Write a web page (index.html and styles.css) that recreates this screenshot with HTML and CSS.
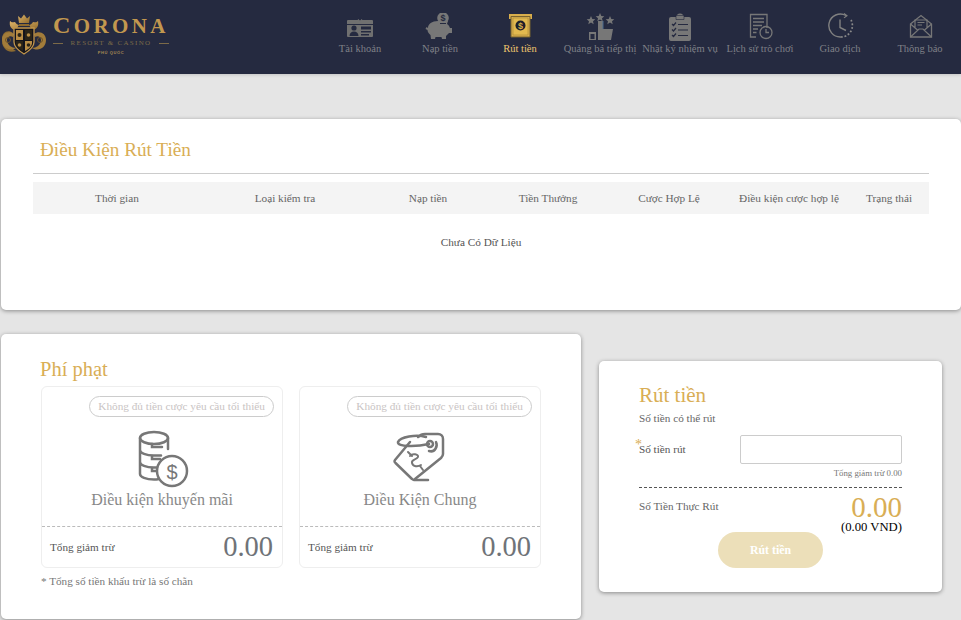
FILE: index.html
```html
<!DOCTYPE html>
<html lang="vi">
<head>
<meta charset="utf-8">
<title>Rút tiền</title>
<link rel="stylesheet" href="styles.css">
</head>
<body>
<header class="topbar">
  <div class="brand">
    <svg class="crest" viewBox="0 0 46 41" width="46" height="41">
      <defs><linearGradient id="gold" x1="0" y1="0" x2="1" y2="1"><stop offset="0" stop-color="#e0b568"/><stop offset="1" stop-color="#8f6a2c"/></linearGradient></defs>
      <path d="M18 9l-1-7 3 2.500L23 .5l3 4 3-2.500-1 7z" fill="url(#gold)"/>
      <path d="M18 10h10v2H18z" fill="#8f6a2c"/>
      <path d="M14 16c-4-1-6-4-5-9 2 2 3 1 5 1 1 2 3 3 4 3l-2 3zM32 16c4-1 6-4 5-9-2 2-3 1-5 1-1 2-3 3-4 3l2 3z" fill="url(#gold)"/>
      <path d="M12 19C7 15 1 18 1 25c0 6 5 11 11 10l3 2c-3 1-6 1-8 0-4-2-6-6-6-10" fill="#8d6b31"/>
      <path d="M13 20C8 16 1 19 1 26s6 11 12 9l2-1c-4 0-9-3-9-8 0-3 3-5 6-3z" fill="#a27c3a"/>
      <path d="M33 20c5-4 12-1 12 6s-6 11-12 9l-2-1c4 0 9-3 9-8 0-3-3-5-6-3z" fill="#a27c3a"/>
      <circle cx="7" cy="26" r="2.500" fill="none" stroke="#6b5128"/><circle cx="39" cy="26" r="2.500" fill="none" stroke="#6b5128"/>
      <path d="M13 14h20v14c0 5-5 9-10 12-5-3-10-7-10-12z" fill="#14141b" stroke="#c2964c" stroke-width="1.300"/>
      <path d="M15 16h7v10h-7zM24 27h7v2c0 3-3 6-7 8z" fill="#b98d45"/>
      <path d="M24 16h7v10h-7zM15 27h7v10c-4-2-7-5-7-8z" fill="#2a2418"/>
      <circle cx="18.500" cy="21" r="2" fill="#2a2418"/><circle cx="27.500" cy="21" r="1.800" fill="#b98d45"/><circle cx="18.500" cy="31" r="1.800" fill="#b98d45"/><circle cx="27.500" cy="31" r="1.800" fill="#2a2418"/>
    </svg>
    <div class="wordmark">
      <div class="wordmark-name"><span class="wordmark-initial">C</span>ORONA</div>
      <div class="wordmark-sub"><i></i><span>RESORT &amp; CASINO</span><i></i></div>
      <div class="wordmark-place">PHÚ QUỐC</div>
    </div>
  </div>
  <nav class="nav">
    <a class="nav-item">
      <svg class="nav-icon" viewBox="0 0 80 28"><path d="M28 7h9.500a3 3 0 0 1 5 0H52a1 1 0 0 1 1 1v3H27V8a1 1 0 0 1 1-1z" fill="#707070"/><circle cx="40" cy="6" r="1.300" fill="#252a40"/><path d="M27 12h26v11a1 1 0 0 1-1 1H28a1 1 0 0 1-1-1z" fill="#707070"/><circle cx="34" cy="15" r="2.600" fill="#252a40"/><path d="M29.500 23c0-3 2-4.500 4.500-4.500s4.500 1.500 4.500 4.500z" fill="#252a40"/><path d="M41 13.500h10v3H41zM41 18h10v1.500H41zM41 21h8v1.500h-8z" fill="#252a40"/></svg>
      <span>Tài khoản</span>
    </a>
    <a class="nav-item">
      <svg class="nav-icon" viewBox="0 0 80 28"><circle cx="43" cy="5" r="5.800" fill="#777"/><text x="43" y="8" class="coin-text" fill="#252a40">$</text><path d="M28 15c0-4 4-7 10-7 2 0 4 .5 5.500 1 1.500-1 3.500-1.500 4.500-1l-1 3c1.500 1 2.500 2.500 3 4h2v5h-3c-1 1-2 2-3 3v3h-4l-.5-2h-6l-.5 2h-4l-.5-4c-2-1.500-3-3.500-3-5l-2-1 1-2z" fill="#777"/><path d="M40 10.500h6" stroke="#252a40" stroke-width="1"/></svg>
      <span>Nạp tiền</span>
    </a>
    <a class="nav-item is-active">
      <svg class="nav-icon" viewBox="0 0 80 28"><path d="M29 1h23v5h-2V4H31v2h-2z" fill="#d9ae4c"/><path d="M31 3.500h19V24H31z" fill="#d9ae4c" stroke="#77622f" stroke-width="1"/><path d="M33 5h15v17H33z" fill="#e2b94f" stroke="#a98838" stroke-width=".6"/><circle cx="40.500" cy="12.500" r="5" fill="#1d1f2b"/><text x="40.500" y="15.500" class="coin-text" fill="#d9ae4c">$</text></svg>
      <span>Rút tiền</span>
    </a>
    <a class="nav-item">
      <svg class="nav-icon" viewBox="0 0 80 28"><path d="M31 3l1.300 2.900 3 .3-2.300 2 .7 3-2.700-1.600-2.700 1.600.7-3-2.300-2 3-.3zM40 0l1.300 2.900 3 .3-2.300 2 .7 3-2.700-1.600-2.700 1.600.7-3-2.300-2 3-.3zM50 3l1.300 2.900 3 .3-2.300 2 .7 3-2.700-1.600-2.700 1.600.7-3-2.300-2 3-.3z" fill="#777"/><path d="M29 19h7v8h-7z" fill="#777"/><path d="M30.500 21h4v5h-4z" fill="#252a40"/><path d="M38 8h5v8h10l-2 11H38z" fill="#777"/><path d="M43 8v8" stroke="#4a6a8f" stroke-width="1"/></svg>
      <span>Quảng bá tiếp thị</span>
    </a>
    <a class="nav-item">
      <svg class="nav-icon" viewBox="0 0 80 28"><path d="M31 4h5.500a3.500 3.500 0 0 1 7 0H49a2 2 0 0 1 2 2v20a2 2 0 0 1-2 2H31a2 2 0 0 1-2-2V6a2 2 0 0 1 2-2z" fill="#777"/><path d="M36 2.500h8v4h-8z" fill="#777" stroke="#252a40" stroke-width=".6"/><path d="M32 11l1.500 1.500 2.500-3M32 16.500l1.500 1.500 2.500-3M32 22l1.500 1.500 2.500-3M38 11.500h10M38 17h10M38 22.500h10" fill="none" stroke="#252a40" stroke-width="1.200"/></svg>
      <span>Nhật ký nhiệm vụ</span>
    </a>
    <a class="nav-item">
      <svg class="nav-icon" viewBox="0 0 80 28"><path d="M36 24h-5.500V1.500h16.500V15" fill="none" stroke="#777" stroke-width="1.300"/><path d="M33 5.500h11M33 9h11M33 12.500h9M33 16h5M33 19.500h3.500" stroke="#777" stroke-width="1.300"/><circle cx="46" cy="19.500" r="6" fill="none" stroke="#777" stroke-width="1.300"/><path d="M46 16v3.500h3" fill="none" stroke="#777" stroke-width="1.300"/></svg>
      <span>Lịch sử trò chơi</span>
    </a>
    <a class="nav-item">
      <svg class="nav-icon" viewBox="0 0 80 28"><path d="M46 2.500A11.500 11.500 0 1 0 41 24" fill="none" stroke="#808080" stroke-width="1.400"/><path d="M41 24A11.500 11.500 0 0 0 51 7" fill="none" stroke="#8a8a8a" stroke-width="1.700" stroke-dasharray="1.800 1.800"/><path d="M44 .5l3 2.200-3 2.200" fill="none" stroke="#808080" stroke-width="1.100"/><path d="M40 6.500v8l6 3" fill="none" stroke="#808080" stroke-width="1.400"/></svg>
      <span>Giao dịch</span>
    </a>
    <a class="nav-item">
      <svg class="nav-icon" viewBox="0 0 80 28"><path d="M30.500 11L41 2.500 51.500 11v13h-21z" fill="none" stroke="#777" stroke-width="1.300"/><path d="M30.500 24l8.500-8h4l8.500 8M30.500 11l7 6M51.500 11l-7 6M35 15V7h12v8" fill="none" stroke="#777" stroke-width="1.200"/><path d="M37.500 9.500h7M37.500 12h4.500" stroke="#777" stroke-width="1"/></svg>
      <span>Thông báo</span>
    </a>
  </nav>
</header>

<main class="page">
  <section class="card card-conditions">
    <h2 class="title title-conditions">Điều Kiện Rút Tiền</h2>
    <table class="table">
      <colgroup><col class="c1"><col class="c2"><col class="c3"><col class="c4"><col class="c5"><col class="c6"><col class="c7"></colgroup>
      <thead>
        <tr><th>Thời gian</th><th>Loại kiểm tra</th><th>Nạp tiền</th><th>Tiền Thưởng</th><th>Cược Hợp Lệ</th><th>Điều kiện cược hợp lệ</th><th>Trạng thái</th></tr>
      </thead>
      <tbody>
        <tr><td colspan="7">Chưa Có Dữ Liệu</td></tr>
      </tbody>
    </table>
  </section>

  <div class="lower">
    <section class="card card-penalty">
      <h2 class="title title-penalty">Phí phạt</h2>
      <div class="penalty-grid">
        <article class="penalty">
          <div class="penalty-body">
            <span class="pill">Không đủ tiền cược yêu cầu tối thiểu</span>
            <svg class="penalty-icon" viewBox="0 0 60 60" width="60" height="60">
              <g fill="none" stroke="#777" stroke-width="2.500" stroke-linecap="round">
                <ellipse cx="22" cy="8" rx="14" ry="6"/>
                <path d="M8 8v36c0 3 6 5.500 14 5.500 1.500 0 3-.1 4-.3M36 8v11M8 20c0 3 6 5.500 14 5.500h7M8 32c0 3 6 5.500 14 5.500h3M20 14v3h10M20 26v3h8M20 38v3h4"/>
                <circle cx="40" cy="41" r="15"/>
              </g>
              <text x="40" y="48.500" class="dollar">$</text>
            </svg>
            <h3 class="penalty-name">Điều kiện khuyến mãi</h3>
          </div>
          <div class="penalty-foot"><span>Tổng giảm trừ</span><strong>0.00</strong></div>
        </article>
        <article class="penalty">
          <div class="penalty-body">
            <span class="pill">Không đủ tiền cược yêu cầu tối thiểu</span>
            <svg class="penalty-icon" viewBox="0 0 60 60" width="60" height="60">
              <g fill="none" stroke="#777" stroke-width="2.500" stroke-linecap="round" stroke-linejoin="round">
                <path d="M20 12L5 30a2 2 0 0 0 .5 3L22 49a2 2 0 0 0 3 0l26-21c1-1 2-2 2-4V9c0-3-2-5-5-5H35c-3 0-5 1-7 3"/>
                <circle cx="40" cy="14" r="3"/>
                <path d="M46 12c2 4-1 11-7 9M36 7C26 4 10 7 8 12c-1 5 18 5 31 2M24 50h14"/>
                <path d="M20 26c2-3 9-2 8 1s-7 2-6 6 6 4 9 2M18 22l4 4M30 36l3 4" stroke-width="2"/>
              </g>
            </svg>
            <h3 class="penalty-name">Điều Kiện Chung</h3>
          </div>
          <div class="penalty-foot"><span>Tổng giảm trừ</span><strong>0.00</strong></div>
        </article>
      </div>
      <p class="note">* Tổng số tiền khấu trừ là số chẵn</p>
    </section>

    <section class="card card-withdraw">
      <h2 class="title title-withdraw">Rút tiền</h2>
      <p class="available">Số tiền có thể rút</p>
      <div class="field">
        <label class="field-label" for="amount">Số tiền rút</label>
        <input class="field-input" id="amount" type="text">
      </div>
      <p class="deduct">Tổng giảm trừ 0.00</p>
      <div class="actual">
        <span class="actual-label">Số Tiền Thực Rút</span>
        <div class="actual-values">
          <strong>0.00</strong>
          <span>(0.00 VND)</span>
        </div>
      </div>
      <button class="submit" type="button">Rút tiền</button>
    </section>
  </div>
</main>
</body>
</html>
```

FILE: styles.css
```css
* { box-sizing: border-box; }
html, body { margin: 0; padding: 0; }
body {
  width: 961px;
  height: 620px;
  overflow: hidden;
  background: #e5e5e5;
  font-family: "Liberation Serif", "Times New Roman", serif;
  color: #666;
}
h2, h3, p { margin: 0; font-weight: 400; }

/* top bar */
.topbar {
  display: flex;
  height: 74px;
  background: #252a40;
  box-shadow: 0 1px 3px rgba(0, 0, 0, .15);
}
.brand {
  display: flex;
  width: 320px;
  padding: 14px 0 0 1px;
  gap: 6px;
}
.crest { flex: none; filter: blur(.35px); }
.wordmark { width: 116px; }
.wordmark-name {
  font-size: 21px;
  line-height: 22px;
  font-weight: 700;
  letter-spacing: 3.400px;
  white-space: nowrap;
  color: #c2984f;
}
.wordmark-initial { font-size: 24px; }
.wordmark-sub {
  display: flex;
  align-items: center;
  justify-content: space-between;
  font-size: 7px;
  line-height: 9px;
  letter-spacing: 1.300px;
  margin-top: 2px;
  color: #7c6a48;
}
.wordmark-sub i { width: 10px; height: 1px; background: #7c6a48; }
.wordmark-place {
  font-family: "Liberation Sans", Arial, sans-serif;
  font-size: 4px;
  line-height: 6px;
  margin-top: 2px;
  font-weight: 700;
  letter-spacing: .6px;
  text-align: center;
  color: #a78a54;
}
.nav { display: flex; }
.nav-item {
  display: flex;
  flex-direction: column;
  align-items: center;
  width: 80px;
  padding-top: 13px;
  font-size: 10.500px;
  line-height: 13px;
  white-space: nowrap;
  color: #7f8087;
}
.nav-icon { display: block; width: 80px; height: 28px; margin-bottom: 1px; }
.nav-item.is-active { color: #f0c76e; }
.coin-text {
  font-family: "Liberation Sans", Arial, sans-serif;
  font-size: 9px;
  font-weight: 700;
  text-anchor: middle;
}

/* cards */
.page { padding: 45px 0 0 1px; }
.card {
  background: #fff;
  border-radius: 5px;
  box-shadow: 0 1px 4px rgba(0, 0, 0, .4);
}
.title {
  font-size: 20px;
  line-height: 24px;
  color: #d9ae55;
}
.card-conditions {
  height: 191px;
  padding: 19px 32px 0;
}
.title-conditions {
  height: 35px;
  padding-left: 7px;
  border-bottom: 1px solid #ccc;
  box-sizing: content-box;
  font-size: 19.200px;
}
.table {
  width: 896px;
  margin-top: 8px;
  border-collapse: collapse;
  table-layout: fixed;
  font-size: 11.250px;
}
.c1, .c2 { width: 168px; }
.c3 { width: 118px; }
.c4 { width: 122px; }
.c5, .c6 { width: 120px; }
.c7 { width: 80px; }
.table th {
  height: 32px;
  padding: 0;
  font-weight: 400;
  background: #f4f4f4;
  color: #666;
  white-space: nowrap;
}
.table td {
  height: 56px;
  padding: 0;
  text-align: center;
  color: #555;
}

/* lower row */
.lower {
  display: flex;
  align-items: flex-start;
  gap: 18px;
  margin-top: 24px;
}
.card-penalty {
  width: 580px;
  height: 285px;
  padding: 23px 40px 0;
}
.title-penalty { font-size: 20.500px; margin-left: -1px; }
.penalty-grid { display: flex; gap: 16px; margin-top: 5px; }
.penalty {
  width: 242px;
  height: 182px;
  display: flex;
  flex-direction: column;
  border: 1px solid #eee;
  border-radius: 6px;
}
.penalty-body {
  flex: 1;
  display: flex;
  flex-direction: column;
  align-items: center;
  padding-top: 9px;
  border-bottom: 1px dashed #bbb;
}
.pill {
  align-self: flex-end;
  margin-right: 8px;
  height: 21px;
  padding: 0 8px;
  border: 1px solid #ccc;
  border-radius: 11px;
  font-size: 11.250px;
  line-height: 19px;
  white-space: nowrap;
  color: #c9c4c4;
}
.penalty-icon { display: block; margin-top: 13px; }
.penalty-name {
  font-size: 16px;
  line-height: 20px;
  color: #888;
}
.dollar {
  font-family: "Liberation Sans", Arial, sans-serif;
  font-size: 20px;
  fill: #777;
  text-anchor: middle;
}
.penalty-foot {
  display: flex;
  align-items: center;
  justify-content: space-between;
  height: 40px;
  padding: 0 9px 0 8px;
  font-size: 11.200px;
  color: #555;
}
.penalty-foot strong {
  font-size: 28.500px;
  font-weight: 400;
  line-height: 30px;
  color: #6f7378;
}
.note { margin-top: 7px; font-size: 11.200px; line-height: 13px; color: #777; }

/* withdraw */
.card-withdraw {
  width: 343px;
  height: 231px;
  margin-top: 27px;
  padding: 22px 40px 0;
}
.title-withdraw { font-size: 21px; }
.available { margin-top: 5px; font-size: 11.200px; line-height: 13px; color: #666; }
.field {
  display: flex;
  align-items: center;
  justify-content: space-between;
  margin-top: 10px;
}
.field-label {
  position: relative;
  padding-bottom: 2px;
  font-size: 11.200px;
  color: #555;
}
.field-label::before {
  content: "*";
  position: absolute;
  left: -4px;
  top: -6px;
  font-size: 14px;
  color: #d9ae55;
}
.field-input {
  width: 162px;
  height: 29px;
  border: 1px solid #ccc;
  border-radius: 2px;
  background: #fff;
  outline: none;
}
.deduct {
  margin-top: 3px;
  text-align: right;
  font-size: 8.800px;
  line-height: 12px;
  color: #777;
}
.actual {
  display: flex;
  justify-content: space-between;
  margin-top: 8px;
  border-top: 1px dashed #555;
}
.actual-label { margin-top: 12px; font-size: 11.200px; line-height: 13px; color: #666; }
.actual-values { display: flex; flex-direction: column; align-items: flex-end; }
.actual-values strong {
  font-size: 29px;
  line-height: 28px;
  margin-top: 5px;
  font-weight: 400;
  color: #d9ae55;
}
.actual-values span { font-size: 12.700px; line-height: 12px; color: #000; }
.submit {
  display: block;
  width: 105px;
  height: 36px;
  margin: -1px auto 0;
  padding: 0;
  border: 0;
  border-radius: 18px;
  background: #ecdfb9;
  font-family: inherit;
  font-size: 11.800px;
  font-weight: 700;
  color: #fff;
}
```
